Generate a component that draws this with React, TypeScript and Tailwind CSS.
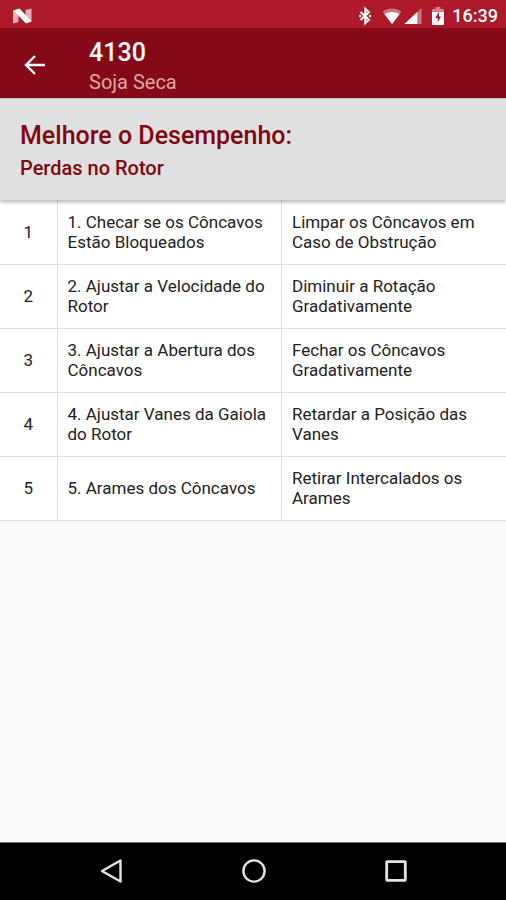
type Step = {
	id: number;
	check: string;
	action: string;
};

const steps: Step[] = [
	{
		id: 1,
		check: "Checar se os Côncavos Estão Bloqueados",
		action: "Limpar os Côncavos em Caso de Obstrução",
	},
	{
		id: 2,
		check: "Ajustar a Velocidade do Rotor",
		action: "Diminuir a Rotação Gradativamente",
	},
	{
		id: 3,
		check: "Ajustar a Abertura dos Côncavos",
		action: "Fechar os Côncavos Gradativamente",
	},
	{
		id: 4,
		check: "Ajustar Vanes da Gaiola do Rotor",
		action: "Retardar a Posição das Vanes",
	},
	{
		id: 5,
		check: "Arames dos Côncavos",
		action: "Retirar Intercalados os Arames",
	},
];

const StatusBar = () => {
	return (
		<div className="flex h-7 items-center bg-[#ad182b] pt-1 pr-2 pl-3 text-white">
			<svg viewBox="0 0 20 16" className="h-4 w-5" aria-hidden="true">
				<path d="M1 2.5 6.5 1v13L1 15.5z" fill="#fff" opacity=".65" />
				<path d="M13.500 2 19.500.500v13.500L13.500 15z" fill="#fff" opacity=".65" />
				<path d="M1.500 2.500 7.500.500 19.500 13l-5.500 2.500z" fill="#fff" />
			</svg>
			<div className="ml-auto flex items-center">
				<svg viewBox="0 0 14 20" className="mr-2.5 h-5 w-3.5" aria-hidden="true">
					<path
						d="M2.500 6 11 13.800 7.300 17.300V2.700L11 6.200 2.500 14"
						fill="none"
						stroke="#fff"
						strokeWidth="2"
					/>
					<circle cx="2.200" cy="10" r="1.200" fill="#fff" />
					<circle cx="12" cy="10" r="1.200" fill="#fff" />
				</svg>
				<svg viewBox="0 0 20 17" className="mr-0.5 h-4 w-5" aria-hidden="true">
					<path d="M0 4C6-.6 14-.6 20 4L10 17z" fill="#fff" opacity=".4" />
					<path d="M2 6.7c5-3.4 11-3.4 16 0L10 17z" fill="#fff" />
				</svg>
				<svg viewBox="0 0 18 17" className="mr-2.5 h-4 w-[18px]" aria-hidden="true">
					<path d="M18 0v17H0z" fill="#fff" opacity=".4" />
					<path d="M13.500 4.300V17H0z" fill="#fff" />
				</svg>
				<svg viewBox="0 0 12 18" className="mr-2 h-[18px] w-3" aria-hidden="true">
					<path
						d="M3.500 0h5v2H11q1 0 1 1v3H0V3q0-1 1-1h2.500z"
						fill="#fff"
						opacity=".45"
					/>
					<path d="M0 5h12v12q0 1-1 1H1q-1 0-1-1z" fill="#fff" />
					<path d="M7 4.500 3.300 11H5.700v4.500L9 9.500H7z" fill="#ad182b" />
				</svg>
				<span className="text-lg leading-5 font-medium">16:39</span>
			</div>
		</div>
	);
};

const AppBar = () => {
	return (
		<header className="flex h-[70px] items-center bg-[#860918] pt-2 pl-6 text-white">
			<button type="button" aria-label="Voltar" className="mr-[43px] mb-1">
				<svg viewBox="0 0 22 20" className="h-5 w-[22px]" aria-hidden="true">
					<path
						d="M21 10H3M11 1 2 10l9 9"
						fill="none"
						stroke="currentColor"
						strokeWidth="2.4"
					/>
				</svg>
			</button>
			<div>
				<h1 className="text-[25px] leading-[30px] font-medium">4130</h1>
				<p className="text-xl leading-7 text-[#dba7a7]">Soja Seca</p>
			</div>
		</header>
	);
};

const SectionHeader = () => {
	return (
		<section className="relative z-10 border-t border-[#c0c0c0] bg-[#e0e0e0] px-5 pt-[21px] pb-4 text-[#7f0710] shadow-[0_2px_4px_rgba(0,0,0,0.3)]">
			<h2 className="text-[25px] leading-8 font-medium">
				Melhore o Desempenho:
			</h2>
			<h3 className="text-xl leading-8 font-medium">Perdas no Rotor</h3>
		</section>
	);
};

const StepsTable = () => {
	return (
		<table className="w-full table-fixed border-collapse bg-white text-[17px] leading-5 text-[#222]">
			<tbody>
				{steps.map((step) => (
					<tr key={step.id} className="h-16 border-b border-[#dedede]">
						<td className="w-[57px] text-center">{step.id}</td>
						<td className="border-l border-[#dedede] px-2.5">
							{`${step.id}. ${step.check}`}
						</td>
						<td className="border-l border-[#dedede] px-2.5">{step.action}</td>
					</tr>
				))}
			</tbody>
		</table>
	);
};

const NavigationBar = () => {
	return (
		<nav className="mt-auto flex h-[58px] items-center justify-center gap-[118px] border-t border-[#777] bg-black pb-0.5 pl-0.5 text-[#e4e4e4]">
			<button type="button" aria-label="Anterior">
				<svg viewBox="0 0 24 24" className="size-6" aria-hidden="true">
					<path
						d="M20.500 1.500v21L2 12z"
						fill="none"
						stroke="currentColor"
						strokeWidth="2.400"
						strokeLinejoin="round"
					/>
				</svg>
			</button>
			<button type="button" aria-label="Início">
				<svg viewBox="0 0 24 24" className="size-6" aria-hidden="true">
					<circle
						cx="12"
						cy="12"
						r="10.600"
						fill="none"
						stroke="currentColor"
						strokeWidth="2.400"
					/>
				</svg>
			</button>
			<button type="button" aria-label="Recentes">
				<svg viewBox="0 0 24 24" className="size-6" aria-hidden="true">
					<rect
						x="2.700"
						y="2.700"
						width="18.600"
						height="18.600"
						rx=".5"
						fill="none"
						stroke="currentColor"
						strokeWidth="2.800"
					/>
				</svg>
			</button>
		</nav>
	);
};

const App = () => {
	return (
		<div className="flex min-h-screen flex-col bg-[#fafafa] font-[Roboto,sans-serif]">
			<StatusBar />
			<AppBar />
			<main>
				<SectionHeader />
				<StepsTable />
			</main>
			<NavigationBar />
		</div>
	);
};

export default App;
